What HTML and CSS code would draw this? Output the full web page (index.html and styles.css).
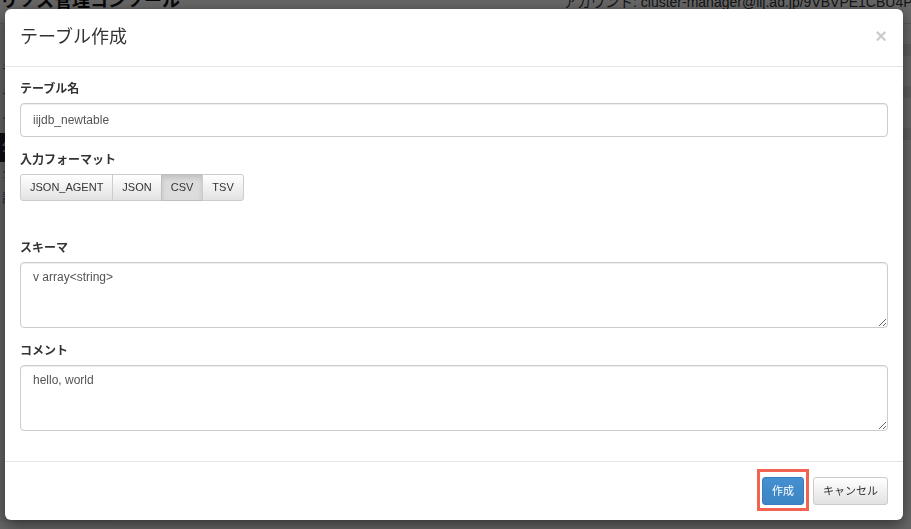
FILE: index.html
```html
<!DOCTYPE html>
<html lang="ja">
<head>
    <meta charset="UTF-8">
    <title>テーブル作成</title>
    <link rel="stylesheet" href="styles.css">
</head>
<body>
    <div class="page">
        <div class="page-header">
            <span class="brand">リソス管理コンソール</span>
            <span class="account">アカウント: cluster-manager@iij.ad.jp/9VBVPE1CBU4P8H1BTQ</span>
        </div>
        <div class="page-main">
            <div class="sidebar">
                <div class="side-item">データ</div>
                <div class="side-item">テーブル</div>
                <div class="side-item">クエリ</div>
                <div class="side-item active">分析</div>
                <div class="side-item">ジョブ</div>
                <div class="side-item">設定</div>
            </div>
            <div class="content">
                <div class="stripe"></div>
                <div class="stripe"></div>
                <div class="stripe"></div>
            </div>
        </div>
    </div>

    <div class="backdrop">
        <div class="modal">
            <div class="modal-header">
                <span class="close">&times;</span>
                <h4 class="modal-title">テーブル作成</h4>
            </div>
            <div class="modal-body">
                <div class="form-group">
                    <label class="label">テーブル名</label>
                    <input class="form-control" type="text" value="iijdb_newtable">
                </div>
                <div class="form-group">
                    <label class="label">入力フォーマット</label>
                    <div class="btn-group">
                        <button class="btn">JSON_AGENT</button>
                        <button class="btn">JSON</button>
                        <button class="btn active">CSV</button>
                        <button class="btn">TSV</button>
                    </div>
                    <div class="help-block"></div>
                </div>
                <div class="form-group">
                    <label class="label">スキーマ</label>
                    <textarea class="form-control area">v array&lt;string&gt;</textarea>
                </div>
                <div class="form-group">
                    <label class="label">コメント</label>
                    <textarea class="form-control area">hello, world</textarea>
                </div>
            </div>
            <div class="modal-footer">
                <span class="highlight">
                    <button class="btn btn-lg btn-primary">作成</button>
                </span>
                <button class="btn btn-lg">キャンセル</button>
            </div>
        </div>
    </div>
</body>
</html>
```

FILE: styles.css
```css
* {
    box-sizing: border-box;
}

body {
    margin: 0;
    background-color: #ffffff;
    color: #333333;
    font-family: "Liberation Sans", "Noto Sans CJK JP", sans-serif;
    font-size: 12px;
    line-height: 17px;
    overflow: hidden;
}

/* page behind the dialog */
.page {
    height: 529px;
}

.page-header {
    display: grid;
    grid-template-columns: 563px 1fr;
    align-items: baseline;
    height: 31px;
    margin-top: -7px;
    overflow: hidden;
    white-space: nowrap;
    border-bottom: 1px solid #dddddd;
}

.brand {
    font-size: 18px;
    font-weight: bold;
    color: #111111;
}

.account {
    font-size: 14px;
    color: #333333;
}

.page-main {
    display: flex;
}

.sidebar {
    width: 113px;
    height: 520px;
    padding-top: 34px;
    background-color: #f5f5f5;
}

.side-item {
    padding: 4px 2px;
    color: #337ab7;
    font-size: 12px;
}

.side-item.active {
    padding: 6px 2px;
    background-color: #222233;
    color: #ffffff;
}

.content {
    flex: 1;
    padding-top: 20px;
}

.stripe {
    height: 12px;
    margin-bottom: 30px;
    background-color: #e8e8e8;
}

/* dialog */
.backdrop {
    position: fixed;
    top: 0;
    left: 0;
    right: 0;
    bottom: 0;
    background-color: rgba(0, 0, 0, 0.6);
}

.modal {
    width: 898px;
    margin: 9px 0 0 5px;
    background-color: #ffffff;
    border-radius: 6px;
    box-shadow: 0 5px 15px rgba(0, 0, 0, 0.5);
}

.modal-header {
    padding: 15px;
    border-bottom: 1px solid #e5e5e5;
}

.modal-title {
    margin: 0;
    font-size: 18px;
    font-weight: normal;
    line-height: 27px;
    color: #333333;
}

.close {
    float: right;
    font-size: 20px;
    font-weight: bold;
    line-height: 24px;
    color: #000000;
    opacity: 0.2;
    margin-right: 1px;
}

.modal-body {
    padding: 14px 15px 15px;
}

.form-group {
    margin-bottom: 15px;
}

.label {
    display: block;
    margin-bottom: 5px;
    font-weight: bold;
    font-size: 12px;
    line-height: 17px;
}

.form-control {
    display: block;
    width: 100%;
    height: 34px;
    padding: 6px 12px;
    font-family: inherit;
    font-size: 12px;
    line-height: 17px;
    color: #555555;
    background-color: #ffffff;
    border: 1px solid #cccccc;
    border-radius: 4px;
    box-shadow: inset 0 1px 1px rgba(0, 0, 0, 0.075);
}

.area {
    height: 66px;
    margin: 0;
    resize: vertical;
}

.help-block {
    height: 24px;
}

.btn-group {
    display: flex;
}

.btn {
    padding: 4px 9px;
    font-family: inherit;
    font-size: 11px;
    line-height: 17px;
    color: #333333;
    background-image: linear-gradient(#ffffff, #e2e2e2);
    border: 1px solid #cccccc;
    border-radius: 3px;
}

.btn-group .btn {
    border-radius: 0;
    margin-left: -1px;
}

.btn-group .btn:first-child {
    border-radius: 3px 0 0 3px;
    margin-left: 0;
}

.btn-group .btn:last-child {
    border-radius: 0 3px 3px 0;
}

.btn.active {
    background-image: none;
    background-color: #dcdcdc;
    border-color: #bfbfbf;
    box-shadow: inset 0 3px 5px rgba(0, 0, 0, 0.125);
}

.modal-footer {
    display: flex;
    justify-content: flex-end;
    align-items: center;
    gap: 9px;
    padding: 15px;
    border-top: 1px solid #e5e5e5;
}

.btn-lg {
    padding: 5px 9px;
    font-size: 11px;
    line-height: 16px;
}

.btn-primary {
    color: #ffffff;
    background-image: linear-gradient(#4590d0, #3d84c4);
    border-color: #3a7dba;
}

.highlight {
    position: relative;
    display: flex;
}

.highlight::after {
    content: "";
    position: absolute;
    top: -8px;
    bottom: -6px;
    left: -5px;
    right: -5px;
    border: 3px solid #f26451;
}
```
